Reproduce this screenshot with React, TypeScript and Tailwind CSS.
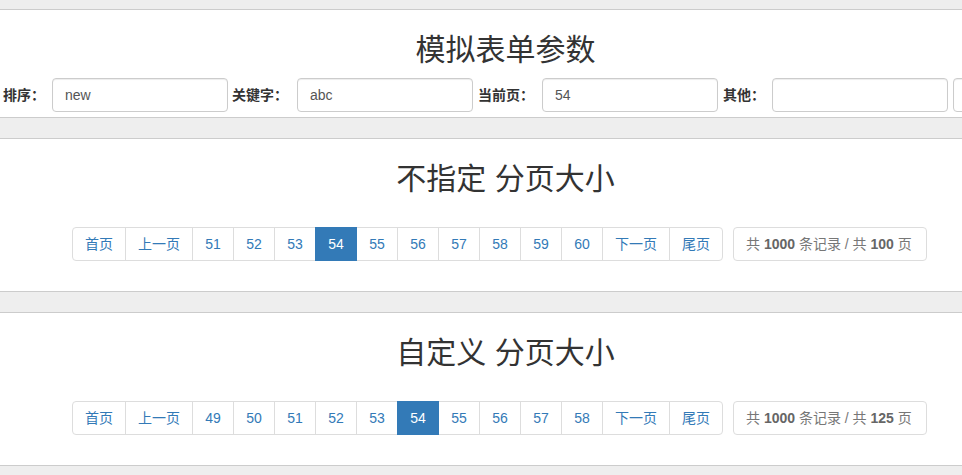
import React from "react";

type PageItem = { label: string; active?: boolean };

function Pager({ items, pages }: { items: PageItem[]; pages: number }) {
  return (
    <div className="mt-[32px] flex justify-center pr-[12px]">
      <ul className="flex shrink-0">
        {items.map((it, i) => {
          const first = i === 0;
          const last = i === items.length - 1;
          const w =
            it.label.length === 3 ? "w-[68px]" : /^\d+$/.test(it.label) ? "w-[42px]" : "w-[54px]";
          return (
            <li
              key={i}
              className={
                "relative block h-[34px] py-[6px] text-center leading-[20px] border " +
                w +
                " " +
                (first ? "rounded-l-[4px] " : "-ml-px ") +
                (last ? "rounded-r-[4px] " : "") +
                (it.active
                  ? "z-10 bg-[#337ab7] border-[#337ab7] text-white"
                  : "bg-white border-[#ddd] text-[#337ab7]")
              }
            >
              {it.label}
            </li>
          );
        })}
      </ul>
      <div className="ml-[10px] h-[34px] w-[194px] shrink-0 rounded-[4px] border border-[#ddd] px-[12px] py-[6px] leading-[20px] text-[#777] whitespace-nowrap">
        共 <b className="font-bold text-[#666]">1000</b> 条记录 / 共{" "}
        <b className="font-bold text-[#666]">{pages}</b> 页
      </div>
    </div>
  );
}

function makeItems(start: number, active: number): PageItem[] {
  const arr: PageItem[] = [{ label: "首页" }, { label: "上一页" }];
  for (let n = start; n < start + 10; n++) arr.push({ label: String(n), active: n === active });
  arr.push({ label: "下一页" }, { label: "尾页" });
  return arr;
}

function Field({ label, value, lw, gap }: { label: string; value: string; lw: string; gap: string }) {
  return (
    <>
      <label className={"shrink-0 font-bold text-[#333] " + lw}>{label}</label>
      <div
        className={
          "shrink-0 w-[176px] h-[34px] rounded-[4px] border border-[#ccc] bg-white px-[12px] py-[6px] leading-[20px] text-[#555] shadow-[inset_0_1px_1px_rgba(0,0,0,0.075)] " +
          gap
        }
      >
        {value}
      </div>
    </>
  );
}

export default function App() {
  return (
    <div className="w-full min-h-[475px] overflow-hidden bg-[#eee] pt-[9px] font-['Liberation_Sans','Noto_Sans_CJK_SC',sans-serif] text-[14px] text-[#333]">
      <section className="mb-[20px] border-y border-[#ccc] bg-white">
        <div className="w-[1011px] pt-[23px] pb-[5px]">
          <h2 className="text-center text-[30px] leading-[33px] font-normal text-[#333]">模拟表单参数</h2>
          <div className="mt-[12px] flex items-center pl-[3px] whitespace-nowrap">
            <Field label="排序：" value="new" lw="w-[49px]" gap="mr-[4px]" />
            <Field label="关键字：" value="abc" lw="w-[65px]" gap="mr-[5px]" />
            <Field label="当前页：" value="54" lw="w-[64px]" gap="mr-[5px]" />
            <Field label="其他：" value="" lw="w-[49px]" gap="mr-[5px]" />
            <div className="shrink-0 w-[176px] h-[34px] rounded-[4px] border border-[#ccc] bg-white shadow-[inset_0_1px_1px_rgba(0,0,0,0.075)]" />
          </div>
        </div>
      </section>

      <section className="mb-[20px] border-y border-[#ccc] bg-white">
        <div className="w-[1011px] pt-[23px] pb-[30px]">
          <h2 className="text-center text-[30px] leading-[33px] font-normal text-[#333]">不指定 分页大小</h2>
          <Pager items={makeItems(51, 54)} pages={100} />
        </div>
      </section>

      <section className="mb-[20px] border-y border-[#ccc] bg-white">
        <div className="w-[1011px] pt-[23px] pb-[30px]">
          <h2 className="text-center text-[30px] leading-[33px] font-normal text-[#333]">自定义 分页大小</h2>
          <Pager items={makeItems(49, 54)} pages={125} />
        </div>
      </section>
    </div>
  );
}
